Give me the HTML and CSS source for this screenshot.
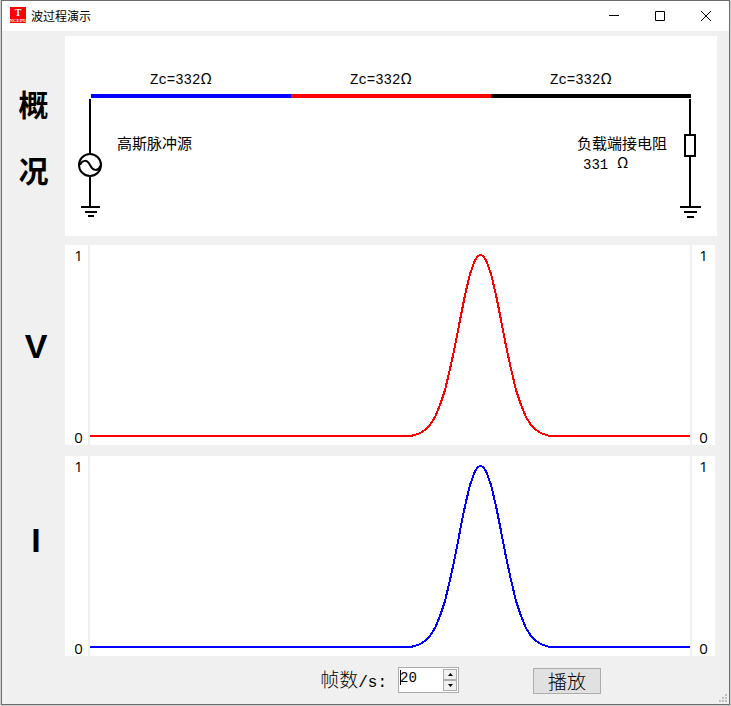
FILE: index.html
```html
<!DOCTYPE html>
<html lang="zh-CN">
<head>
<meta charset="utf-8">
<title>波过程演示</title>
<link rel="stylesheet" href="styles.css">
</head>
<body>
<div class="window">
  <header class="titlebar">
    <svg class="app-icon" viewBox="0 0 16 16" aria-hidden="true">
      <rect width="16" height="16" fill="#f00"/>
      <text x="8" y="9" class="icon-letter">T</text>
      <text x="8" y="15" class="icon-caption">NCEPU</text>
    </svg>
    <h1 class="title">波过程演示</h1>
    <button class="caption-button" type="button" aria-label="最小化">
      <svg viewBox="0 0 10 10"><path d="M0 4.5H10"/></svg>
    </button>
    <button class="caption-button" type="button" aria-label="最大化">
      <svg viewBox="0 0 10 10"><path d="M.5 .5H9.5V9.5H.5Z"/></svg>
    </button>
    <button class="caption-button" type="button" aria-label="关闭">
      <svg viewBox="0 0 10 10"><path d="M0 0L10 10M10 0L0 10"/></svg>
    </button>
  </header>

  <main class="content">
    <h2 class="row-label row-label-cjk"><span>概</span><span>况</span></h2>
    <svg class="circuit" viewBox="0 0 652 200" role="img" aria-label="概况">
      <g class="line">
        <path d="M26 60H226" stroke="#00f"/>
        <path d="M226 60H426" stroke="#f00"/>
        <path d="M426 60H626" stroke="#000"/>
      </g>
      <g class="text">
        <text x="85" y="48"><tspan class="mono">Zc=332</tspan>Ω</text>
        <text x="285" y="48"><tspan class="mono">Zc=332</tspan>Ω</text>
        <text x="485" y="48"><tspan class="mono">Zc=332</tspan>Ω</text>
        <text x="52" y="113">高斯脉冲源</text>
        <text x="512" y="113">负载端接电阻</text>
        <text x="518" y="133" class="mono">331</text>
        <text x="552" y="132">Ω</text>
      </g>
      <g class="wire">
        <path d="M25 63V118M25 141V171"/>
        <circle cx="25" cy="129" r="11"/>
        <path d="M15 129C17 124 22 123 25 129S33 136 36 129"/>
        <path d="M16 171H35M20 176H32M23 180H29"/>
        <path d="M625 63V99M625 120V171"/>
        <rect x="620" y="99" width="10" height="21"/>
        <path d="M615 171H636M619 176H632M622 181H629"/>
      </g>
    </svg>

    <h2 class="row-label">V</h2>
    <section class="chart chart-voltage">
      <div class="scale"><span>1</span><span>0</span></div>
      <svg class="plot" viewBox="0 0 600 200" preserveAspectRatio="none" role="img" aria-label="V">
        <path d="M0 191H320L325 190L330 188L335 185L340 180L345 172L350 160L355 145L360 124L365 101L370 75L375 50L380 29L385 15L388 11L390 10H391L393 11L396 15L401 29L406 50L411 75L416 101L421 124L426 145L431 160L436 172L441 180L446 185L451 188L456 190L460 191H600"/>
      </svg>
      <div class="scale scale-right"><span>1</span><span>0</span></div>
    </section>

    <h2 class="row-label row-label-raised">I</h2>
    <section class="chart chart-current">
      <div class="scale"><span>1</span><span>0</span></div>
      <svg class="plot" viewBox="0 0 600 200" preserveAspectRatio="none" role="img" aria-label="I">
        <path d="M0 191H320L325 190L330 188L335 185L340 180L345 172L350 160L355 145L360 124L365 101L370 75L375 50L380 29L385 15L388 11L390 10H391L393 11L396 15L401 29L406 50L411 75L416 101L421 124L426 145L431 160L436 172L441 180L446 185L451 188L456 190L460 191H600"/>
      </svg>
      <div class="scale scale-right"><span>1</span><span>0</span></div>
    </section>
  </main>

  <footer class="controls">
    <label class="rate-label" for="rate">帧数<span class="mono">/s:</span></label>
    <div class="spinner">
      <input id="rate" type="number" value="20" min="1">
      <div class="steps">
        <button type="button" aria-label="增加"><svg viewBox="0 0 5 3"><path d="M0 3L2.5 0L5 3Z"/></svg></button>
        <button type="button" aria-label="减少"><svg viewBox="0 0 5 3"><path d="M0 0L2.5 3L5 0Z"/></svg></button>
      </div>
    </div>
    <button class="play" type="button">播放</button>
  </footer>

  <svg class="size-grip" viewBox="0 0 8 8" aria-hidden="true">
    <path d="M6 0h2v2h-2zM3 3h2v2h-2zM6 3h2v2h-2zM0 6h2v2h-2zM3 6h2v2h-2zM6 6h2v2h-2z"/>
  </svg>
</div>
</body>
</html>
```
FILE: styles.css
```css
* {
  box-sizing: border-box;
}

body {
  margin: 0;
  min-height: 100vh;
  padding: 0 1px 1px;
  display: flex;
  background: #cfcfcf;
  color: #000;
  font-family: "Liberation Sans", "Noto Sans CJK SC", sans-serif;
}

h1,
h2 {
  margin: 0;
}

button {
  padding: 0;
  border: 0;
  color: inherit;
  font-family: inherit;
}

.window {
  position: relative;
  flex: 1;
  min-width: 0;
  border: 1px solid #6d6d6d;
  background: #f0f0f0;
}

.titlebar {
  display: flex;
  align-items: center;
  height: 30px;
  padding-left: 8px;
  background: #fff;
}

.app-icon {
  width: 16px;
  height: 16px;
  margin-bottom: 2px;
}

.icon-letter,
.icon-caption {
  fill: #fff;
  font-family: "Liberation Serif", serif;
  font-weight: bold;
  text-anchor: middle;
}

.icon-letter {
  font-size: 10px;
}

.icon-caption {
  font-size: 5px;
}

.title {
  flex: 1;
  padding-left: 5px;
  font-family: "Noto Sans CJK SC", sans-serif;
  font-size: 12px;
  font-weight: normal;
  line-height: 16px;
}

.caption-button {
  display: grid;
  place-items: center;
  width: 46px;
  height: 28px;
  background: none;
}

.caption-button svg {
  width: 10px;
  height: 10px;
  overflow: visible;
  fill: none;
  stroke: #000;
}

.content {
  display: grid;
  grid-template-columns: 63px minmax(0, 1fr);
  padding: 5px 12px 0 0;
}

.row-label {
  display: flex;
  flex-direction: column;
  align-items: center;
  justify-content: center;
  padding: 11px 0 0 5px;
  font-size: 34px;
  line-height: 40px;
}

.row-label-cjk {
  padding: 0;
  font-family: "Noto Sans CJK SC", sans-serif;
  font-size: 30px;
  line-height: 66px;
}

.row-label-raised {
  padding: 0 0 21px 5px;
}

.circuit {
  display: block;
  width: 100%;
  background: #fff;
}

.line {
  stroke-width: 4;
}

.text {
  font-family: "Noto Sans CJK SC", sans-serif;
  font-size: 15px;
}

.text .mono {
  font-family: "Liberation Mono", monospace;
  font-size: 14px;
}

.wire {
  fill: none;
  stroke: #000;
  stroke-width: 2;
}

.chart {
  display: grid;
  grid-template-columns: 23px minmax(0, 1fr) 23px;
  gap: 2px;
  height: 200px;
  margin: 9px 2px 0 0;
}

.chart-current {
  margin-top: 11px;
}

.scale {
  display: flex;
  flex-direction: column;
  justify-content: space-between;
  padding: 2px 0 0 4px;
  background: #fff;
  font-family: "Open Sans", sans-serif;
  font-size: 15px;
  line-height: 16px;
  text-align: center;
}

.scale-right {
  padding-left: 0;
}

.plot {
  width: 100%;
  height: 200px;
  background: #fff;
}

.plot path {
  fill: none;
  stroke-width: 2;
  shape-rendering: crispEdges;
  vector-effect: non-scaling-stroke;
}

.chart-voltage path {
  stroke: #f00;
}

.chart-current path {
  stroke: #00f;
}

.controls {
  display: flex;
  align-items: flex-start;
  justify-content: flex-end;
  padding: 11px 128px 10px 0;
}

.rate-label {
  height: 26px;
  font-family: "Noto Sans CJK SC", sans-serif;
  font-size: 19px;
  font-weight: 300;
  line-height: 24px;
}

.rate-label .mono {
  font-family: "Liberation Mono", monospace;
  font-size: 16px;
}

.spinner {
  position: relative;
  display: flex;
  width: 61px;
  height: 26px;
  margin: 0 74px 0 11px;
  padding: 1px;
  border: 1px solid #abadb3;
  background: #fff;
}

/* text caret */
.spinner::before {
  content: "";
  position: absolute;
  left: 1px;
  top: 2px;
  width: 1px;
  height: 15px;
  background: #000;
}

.spinner input {
  flex: 1;
  min-width: 0;
  padding: 0 0 4px;
  border: 0;
  outline: 0;
  background: none;
  font-family: "Liberation Mono", monospace;
  font-size: 14px;
  appearance: textfield;
}

.spinner input::-webkit-inner-spin-button {
  display: none;
}

.steps {
  display: grid;
  gap: 0;
  width: 14px;
}

.steps button {
  display: grid;
  place-items: center;
  border: 1px solid #acacac;
  background: #f0f0f0;
}

.steps svg {
  width: 5px;
  height: 3px;
}

.play {
  width: 68px;
  height: 26px;
  margin-top: 1px;
  border: 1px solid #adadad;
  background: #e1e1e1;
  font-family: "Noto Sans CJK SC", sans-serif;
  font-size: 19px;
  font-weight: 300;
  line-height: 22px;
}

.size-grip {
  position: absolute;
  right: 2px;
  bottom: 2px;
  width: 8px;
  height: 8px;
  fill: #bfbfbf;
}
```
